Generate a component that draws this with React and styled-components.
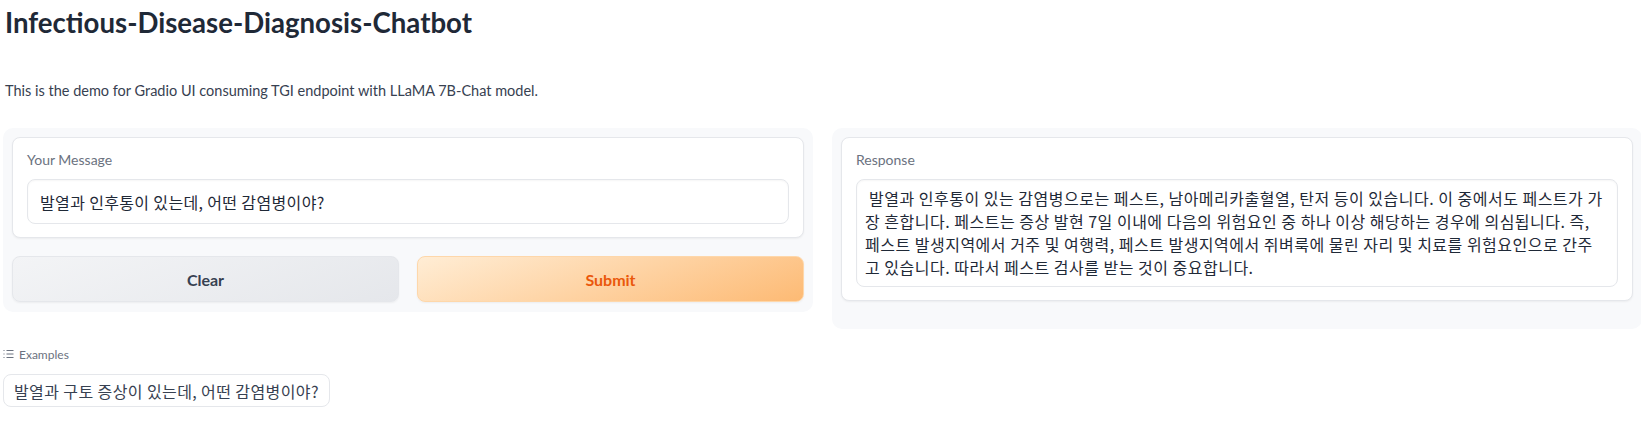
import styled, { createGlobalStyle } from "styled-components";

const GlobalStyle = createGlobalStyle`
  html, body {
    margin: 0;
    padding: 0;
    background: #ffffff;
    overflow: hidden;
  }
  body {
    font-family: Lato, "Noto Sans CJK KR", sans-serif;
    color: #1f2937;
  }
`;

const Page = styled.div`
  width: 1639px;
  padding-left: 3px;
`;

const Title = styled.h1`
  margin: 0;
  padding: 6px 0 0 2px;
  font-size: 27.6px;
  line-height: 34px;
  font-weight: 700;
  color: #1f2937;
`;

const Description = styled.p`
  margin: 41px 0 0 2px;
  font-size: 14.5px;
  line-height: 20px;
  color: #374151;
`;

const Row = styled.div`
  display: flex;
  gap: 19px;
  align-items: flex-start;
  margin-top: 27px;
`;

const Panel = styled.div`
  width: 810px;
  box-sizing: border-box;
  background: #f8f9fb;
  border-radius: 10px;
  padding: 9px 9px ${(p) => p.$bottom}px;
  display: flex;
  flex-direction: column;
  gap: 18px;
`;

const Card = styled.div`
  background: #ffffff;
  border: 1px solid #e5e7eb;
  border-radius: 8px;
  box-shadow: 0 1px 2px rgba(0, 0, 0, 0.05);
  padding: 11px 14px 13px;
`;

const Label = styled.div`
  font-size: 14px;
  line-height: 22px;
  color: #6b7280;
  margin-bottom: 8px;
`;

const Input = styled.div`
  height: 45px;
  box-sizing: border-box;
  border: 1px solid #e5e7eb;
  border-radius: 8px;
  box-shadow: inset 0 1px 2px rgba(0, 0, 0, 0.04);
  padding: 0 12px;
  display: flex;
  align-items: center;
  font-family: "Noto Sans CJK KR", sans-serif;
  font-size: 16px;
  letter-spacing: 0.35px;
  color: #1f2937;
`;

const TextArea = styled.div`
  border: 1px solid #e5e7eb;
  border-radius: 8px;
  box-shadow: inset 0 1px 2px rgba(0, 0, 0, 0.04);
  padding: 7px 8px;
  font-family: "Noto Sans CJK KR", sans-serif;
  font-size: 16px;
  letter-spacing: 0.5px;
  line-height: 23px;
  color: #1f2937;
`;

const Line = styled.div`
  white-space: pre;
`;

const Buttons = styled.div`
  display: grid;
  grid-template-columns: 1fr 1fr;
  gap: 18px;
`;

const Button = styled.button`
  height: 46px;
  border-radius: 8px;
  border: 1px solid ${(p) => (p.$primary ? "#fed7aa" : "#e5e7eb")};
  background: ${(p) =>
    p.$primary
      ? "linear-gradient(160deg, #ffedd5 0%, #fdba74 100%)"
      : "linear-gradient(160deg, #f3f4f6 0%, #e5e7eb 100%)"};
  color: ${(p) => (p.$primary ? "#ea580c" : "#374151")};
  font-family: Lato, sans-serif;
  font-size: 16px;
  font-weight: 700;
  box-shadow: 0 1px 2px rgba(0, 0, 0, 0.05);
  cursor: pointer;
`;

const ExamplesHead = styled.div`
  display: flex;
  align-items: center;
  gap: 5px;
  margin-top: 17px;
  height: 16px;
  font-size: 12px;
  color: #6b7280;
`;

const ExampleButton = styled.button`
  margin-top: 12px;
  height: 33px;
  padding: 0 10px;
  border: 1px solid #e5e7eb;
  border-radius: 8px;
  background: #ffffff;
  font-family: "Noto Sans CJK KR", sans-serif;
  font-size: 16px;
  letter-spacing: 0.4px;
  color: #374151;
  cursor: pointer;
`;

const ListIcon = () => (
  <svg width="11" height="10" viewBox="0 0 11 10" fill="none" stroke="#6b7280" strokeWidth="1.2">
    <path d="M0.5 1.5h1M0.5 5h1M0.5 8.5h1M3.5 1.5h7M3.5 5h7M3.5 8.5h7" />
  </svg>
);

const responseLines = [
  " 발열과 인후통이 있는 감염병으로는 페스트, 남아메리카출혈열, 탄저 등이 있습니다. 이 중에서도 페스트가 가",
  "장 흔합니다. 페스트는 증상 발현 7일 이내에 다음의 위험요인 중 하나 이상 해당하는 경우에 의심됩니다. 즉,",
  "페스트 발생지역에서 거주 및 여행력, 페스트 발생지역에서 쥐벼룩에 물린 자리 및 치료를 위험요인으로 간주",
  "고 있습니다. 따라서 페스트 검사를 받는 것이 중요합니다.",
];

export default function App() {
  return (
    <Page>
      <GlobalStyle />
      <Title>Infectious-Disease-Diagnosis-Chatbot</Title>
      <Description>
        This is the demo for Gradio UI consuming TGI endpoint with LLaMA 7B-Chat model.
      </Description>
      <Row>
        <Panel $bottom={10}>
          <Card>
            <Label>Your Message</Label>
            <Input>발열과 인후통이 있는데, 어떤 감염병이야?</Input>
          </Card>
          <Buttons>
            <Button>Clear</Button>
            <Button $primary>Submit</Button>
          </Buttons>
        </Panel>
        <Panel $bottom={28}>
          <Card>
            <Label>Response</Label>
            <TextArea>
              {responseLines.map((l, i) => (
                <Line key={i}>{l}</Line>
              ))}
            </TextArea>
          </Card>
        </Panel>
      </Row>
      <ExamplesHead>
        <ListIcon />
        Examples
      </ExamplesHead>
      <ExampleButton>발열과 구토 증상이 있는데, 어떤 감염병이야?</ExampleButton>
    </Page>
  );
}
